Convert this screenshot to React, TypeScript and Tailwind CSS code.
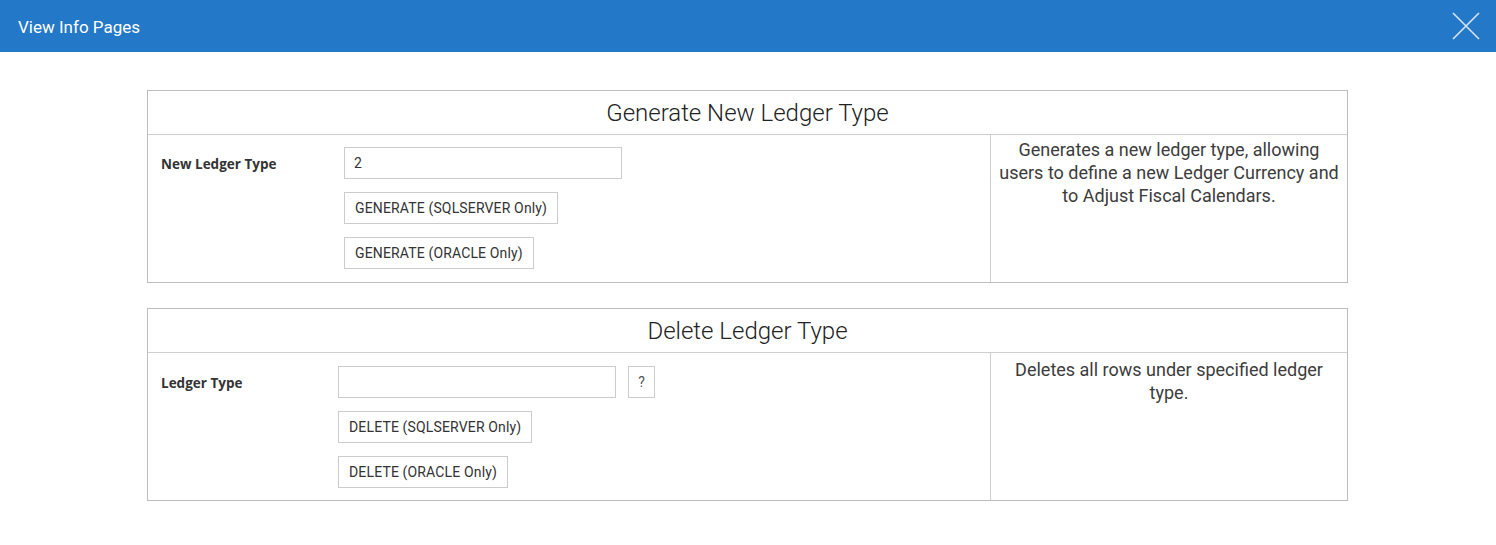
import React from "react";

const barlow = { fontFamily: "Roboto, 'Liberation Sans', sans-serif" };

function Btn({ children }: { children: React.ReactNode }) {
  return (
    <button className="h-[32px] px-[10px] border border-[#cccccc] bg-white text-[14px] text-[#333333] leading-none tracking-[0.15px] whitespace-nowrap">
      {children}
    </button>
  );
}

function Card({
  title,
  label,
  labelW,
  value,
  help,
  buttons,
  desc,
  topPad,
  botPad,
  descPad,
}: {
  title: string;
  label: string;
  labelW: string;
  value: string;
  help?: boolean;
  buttons: string[];
  desc: React.ReactNode;
  topPad: string;
  botPad: string;
  descPad: string;
}) {
  return (
    <div className="w-[1201px] border border-[#bdbdbd] bg-white">
      <div className="h-[44px] flex items-center justify-center border-b border-[#cfcfcf] text-[24px] font-light text-[#222222] pt-[1px]">
        {title}
      </div>
      <div className="flex">
        <div className={`w-[843px] border-r border-[#cfcfcf] flex pl-[13px] ${topPad} ${botPad}`}>
          <div
            className={`${labelW} pt-[7px] text-[13.5px] font-bold text-[#333333]`}
            style={{ fontFamily: "'Open Sans', 'Liberation Sans', sans-serif" }}
          >
            {label}
          </div>
          <div className="flex flex-col items-start gap-[13px]">
            <div className="flex items-center gap-[12px]">
              <div className="w-[278px] h-[32px] border border-[#cccccc] flex items-center px-[9px] text-[14px] text-[#333333]">
                {value}
              </div>
              {help && (
                <div className="w-[27px] h-[32px] border border-[#cccccc] flex items-center justify-center text-[14px] text-[#555555]">
                  ?
                </div>
              )}
            </div>
            {buttons.map((b) => (
              <Btn key={b}>{b}</Btn>
            ))}
          </div>
        </div>
        <div className={`flex-1 px-[2px] ${descPad} text-center text-[18px] leading-[23px] text-[#3c3c3c] whitespace-nowrap`}>
          {desc}
        </div>
      </div>
    </div>
  );
}

export default function App() {
  return (
    <div className="w-[1496px] h-[545px] bg-white" style={barlow}>
      <div className="h-[52px] bg-[#2378c8] flex items-center justify-between pl-[18px] pr-[15px]">
        <span className="text-white text-[17px] pt-[3px]">View Info Pages</span>
        <svg width="28" height="28" viewBox="0 0 28 28" className="mr-[1px]">
          <path d="M1 1 L27 27 M27 1 L1 27" stroke="#d6e6f6" strokeWidth="1.6" fill="none" />
        </svg>
      </div>
      <div className="flex flex-col items-start pl-[147px] pt-[38px] gap-[25px]">
        <Card
          title="Generate New Ledger Type"
          label="New Ledger Type"
          labelW="w-[183px]"
          value="2"
          buttons={["GENERATE (SQLSERVER Only)", "GENERATE (ORACLE Only)"]}
          desc={
            <>
              Generates a new ledger type, allowing
              <br />
              users to define a new Ledger Currency and
              <br />
              to Adjust Fiscal Calendars.
            </>
          }
          topPad="pt-[12px]"
          botPad="pb-[13px]"
          descPad="pt-[3px]"
        />
        <Card
          title="Delete Ledger Type"
          label="Ledger Type"
          labelW="w-[177px]"
          value=""
          help
          buttons={["DELETE (SQLSERVER Only)", "DELETE (ORACLE Only)"]}
          desc={
            <>
              Deletes all rows under specified ledger
              <br />
              type.
            </>
          }
          topPad="pt-[13px]"
          botPad="pb-[12px]"
          descPad="pt-[5px]"
        />
      </div>
    </div>
  );
}
